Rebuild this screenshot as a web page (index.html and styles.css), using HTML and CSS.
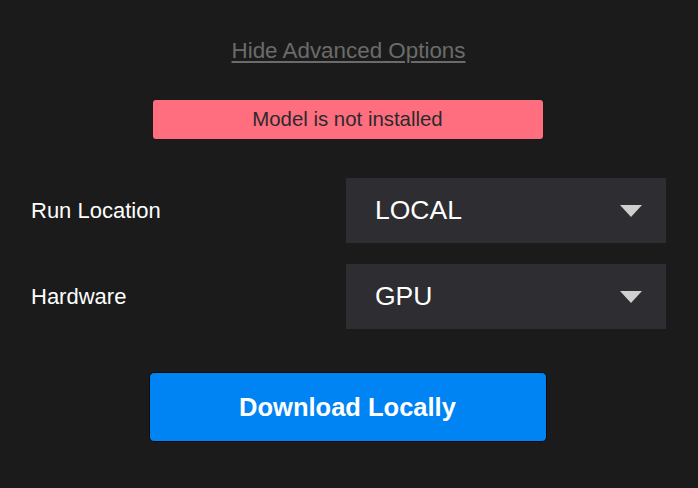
FILE: index.html
```html
<!DOCTYPE html>
<html>
<head>
<meta charset="utf-8">
<link rel="stylesheet" href="styles.css">
</head>
<body>
<div class="panel">
  <a class="toggle" href="#">Hide Advanced Options</a>
  <div class="alert">Model is not installed</div>
  <div class="rows">
    <div class="row">
      <span class="label">Run Location</span>
      <div class="select"><span>LOCAL</span><span class="caret"></span></div>
    </div>
    <div class="row">
      <span class="label">Hardware</span>
      <div class="select"><span>GPU</span><span class="caret"></span></div>
    </div>
  </div>
  <button class="primary">Download Locally</button>
</div>
</body>
</html>
```
FILE: styles.css
```css
html, body {
  margin: 0;
  padding: 0;
  background: #1b1b1b;
  width: 698px;
  height: 488px;
  overflow: hidden;
  font-family: "Liberation Sans", Arial, sans-serif;
}
.panel {
  display: flex;
  flex-direction: column;
  align-items: center;
  padding: 38px 32px 0 31px;
}
.toggle {
  color: #6b6b6b;
  font-size: 22.4px;
  line-height: 26px;
  text-decoration: underline;
  text-underline-offset: 3px;
}
.alert {
  margin-top: 36px;
  margin-right: 2px;
  width: 390px;
  height: 39px;
  background: #ff6e7e;
  border-radius: 3px;
  color: #2a2a2e;
  font-size: 20.4px;
  display: flex;
  align-items: center;
  justify-content: center;
}
.rows {
  align-self: stretch;
  margin-top: 39px;
  display: flex;
  flex-direction: column;
  gap: 21px;
}
.row {
  display: flex;
  justify-content: space-between;
  align-items: center;
}
.label {
  color: #ffffff;
  font-size: 22px;
}
.select {
  width: 320px;
  height: 65px;
  background: #2d2d32;
  box-sizing: border-box;
  padding: 0 24px 0 29px;
  display: flex;
  align-items: center;
  justify-content: space-between;
  color: #ffffff;
  font-size: 26.5px;
}
.caret {
  width: 0;
  height: 0;
  border-left: 11px solid transparent;
  border-right: 11px solid transparent;
  border-top: 12px solid #cfcfcf;
}
.primary {
  margin-top: 43px;
  margin-right: 2px;
  width: 398px;
  height: 70px;
  background: #0084f4;
  border: 1px solid #0a0a0a;
  border-radius: 5px;
  color: #ffffff;
  font-family: "Liberation Sans", Arial, sans-serif;
  font-weight: bold;
  font-size: 25.5px;
}
```
